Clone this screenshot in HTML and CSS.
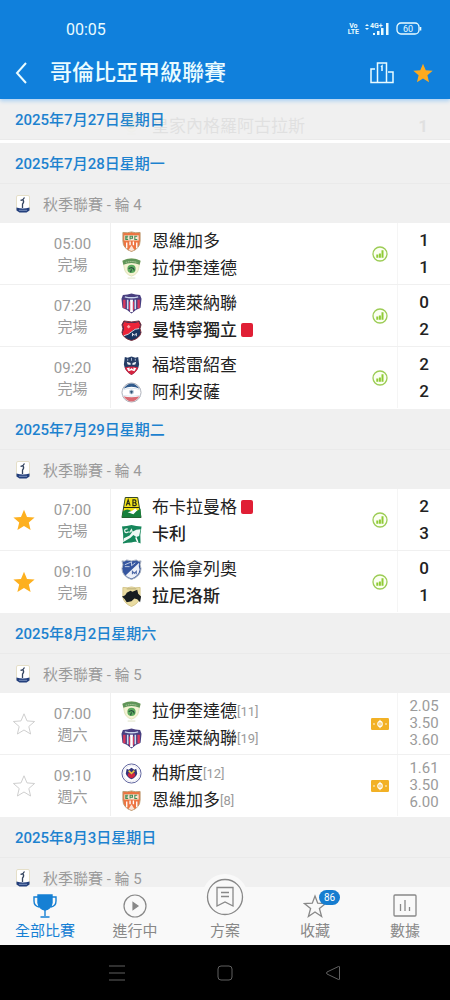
FILE: index.html
```html
<!DOCTYPE html>
<html lang="zh-Hant">
<head>
    <meta charset="UTF-8">
    <meta name="viewport" content="width=device-width, initial-scale=1">
    <title>哥倫比亞甲級聯賽</title>
    <link rel="stylesheet" href="styles.css">
</head>
<body>
    <!-- Shared icons and club badges -->
    <svg class="sprite" aria-hidden="true">
        <symbol id="star" viewBox="0 0 24 24">
            <path d="M12 1.800l3 7.100 7.600.6-5.800 5 1.800 7.500-6.600-4-6.600 4 1.800-7.500-5.800-5 7.600-.6z"/>
        </symbol>
        <symbol id="stats" viewBox="0 0 16 16">
            <circle cx="8" cy="8" r="7" fill="#fbfff2" stroke="#9ccc55" stroke-width="1.300"/>
            <path d="M5.300 8.500v3.200M7.900 7.500v4.200M10.500 4.200v7.500" fill="none" stroke="#8fcb35" stroke-width="2"/>
        </symbol>
        <symbol id="ticket" viewBox="0 0 18 12">
            <rect width="18" height="12" rx="1.200" fill="#f2b125"/>
            <ellipse cx="9" cy="6" rx="2.200" ry="2.700" fill="none" stroke="#fff" stroke-width="1.200"/>
            <path d="M9 1.800v8.400" stroke="#fff" stroke-width="1"/>
            <circle cx="3" cy="6" r=".8" fill="#fff"/>
            <circle cx="15" cy="6" r=".8" fill="#fff"/>
        </symbol>
        <symbol id="league" viewBox="0 0 14 18">
            <rect x=".5" y=".5" width="13" height="15" rx="1.500" fill="#fff" stroke="#e5dfc8"/>
            <path d="M4.500 5q2 1 4-2.500M7 5q1.500 2-.5 4v4" fill="none" stroke="#35455f" stroke-width="1.300"/>
            <path d="M.5 12.500q6.500 2 13 0v3l-3 2h-7l-3-2z" fill="#233f7c"/>
            <path d="M3 15.300h8" stroke="#9fb2d8" stroke-width=".7"/>
        </symbol>
        <symbol id="envigado" viewBox="0 0 22 22">
            <path d="M2 1.500q4.500 1 9-.5 4.500 1.500 9 .5v9q0 8-9 11-9-3-9-11z" fill="#ee7440" stroke="#b99a70"/>
            <path d="M6 12v6M9.500 11v4M13 11v4M16.500 12v6" stroke="#fff" stroke-width="1.400"/>
            <path d="M8 20l3-5 3 5-3 1z" fill="#fbe3d5"/>
            <path d="M3.500 4.500h15V10h-15z" fill="#f7e5d2"/>
            <path d="M7.500 5.500H5V9h2.500M5 7.200h2M9.500 9V5.500H12V7.500H9.500M17 5.500h-2.500V9H17" fill="none" stroke="#3f8c55" stroke-width="1.100"/>
        </symbol>
        <symbol id="equidad" viewBox="0 0 22 22">
            <path d="M2 3q9-4.500 18 0l-1.500 8q-1 6-7.500 8-6.500-2-7.500-8z" fill="#f5f2d3" stroke="#d6dcae" stroke-width=".8"/>
            <path d="M1.500 3q9.500-5 19 0l-1 4.200q-8.500-4-17 0z" fill="#609559"/>
            <path d="M5 4.700q6-2 12 0" fill="none" stroke="#bdd6a9" stroke-width=".9" stroke-dasharray="1.500 .8"/>
            <circle cx="11" cy="11.500" r="4.300" fill="#5cab5e"/>
            <path d="M8 11l3-1 2 1 1 2M10 15l1-3" fill="none" stroke="#24483a" stroke-width="1.100"/>
            <path d="M7 21h8" stroke="#dce1c4" stroke-width="1"/>
        </symbol>
        <symbol id="union" viewBox="0 0 22 22">
            <path d="M2 2q5 0 9-1.500Q15 2 20 2l1.500 4-1 9.500q-5.500 2-9.500 6-4-4-9.500-6L.5 6z" fill="#493f80"/>
            <path d="M3.500 7v9M18.500 7v9" stroke="#d83a5d" stroke-width="2.500"/>
            <path d="M7 7v10M15 7v10" stroke="#cddcf0" stroke-width="1.600"/>
            <path d="M11 7v13" stroke="#fff" stroke-width="3"/>
            <path d="M9 9v9M13 9v9" stroke="#d6365b" stroke-width="1.200"/>
            <path d="M4 4q7 2 14 0" fill="none" stroke="#cad7ed" stroke-width="1.400"/>
        </symbol>
        <symbol id="medellin" viewBox="0 0 22 22">
            <path d="M3 1q8 2 16 0l2 4q-2 4 0 8-1 6-10 8.500Q2 19 1 13q2-4 0-8z" fill="#17345f" stroke="#7a2936"/>
            <path d="M3.500 2q7.500 2 15 0l1.500 3-1 4q-5 0-8 3-4 4-8.500 4.500-1-2-.5-4Q4 9 2 5z" fill="#ed2438"/>
            <path d="M3 16.500q5-1 8.500-4.500 3-3 7.500-3" fill="none" stroke="#fff" stroke-width=".8"/>
            <path d="M6 7l2-2 2 2-2 2z" fill="#f9a8ac"/>
            <path d="M12 17v-3l2 2 2-2v3" fill="none" stroke="#e9eff7" stroke-width="1"/>
        </symbol>
        <symbol id="fortaleza" viewBox="0 0 22 22">
            <path d="M4 2l3 1 4-1.500L15 3l3-1 1 8q-1 7-8 11-7-4-8-11z" fill="#253c65"/>
            <path d="M6 7l4 1.500v2l-3-.5zM12 8.500L16 7l-1 3-3 .5z" fill="#eef2f6"/>
            <path d="M7 4v2M11 3v3M15 4v2" stroke="#a8b5cc" stroke-width="1"/>
            <path d="M4 13q7-2 14 0-1 4-7 8-6-4-7-8z" fill="#d52440"/>
            <path d="M6 14l3-1v2.500l2-2 2 2V13l3 1-2 3-3-1-3 1z" fill="#fff"/>
        </symbol>
        <symbol id="alianza" viewBox="0 0 22 22">
            <circle cx="11" cy="11" r="10" fill="#fff" stroke="#aaacb6"/>
            <path d="M2.500 7Q11-4 19.500 7 11 3 2.500 7z" fill="#315b8d"/>
            <path d="M2.500 15q8.500 2 17 0Q11 26 2.500 15z" fill="#d96972"/>
            <path d="M1.500 8.500q9.500-4 19 0M1.500 14q9.500 2 19 0" fill="none" stroke="#dbe5ee"/>
            <circle cx="11" cy="10.500" r="2.600" fill="#b8cadb"/>
            <path d="M9.500 10l1.500-1 1.500 1-1 2h-1z" fill="#2e5274"/>
        </symbol>
        <symbol id="bucaramanga" viewBox="0 0 22 22">
            <path d="M4.500.5h13L21 21.500H1z" fill="#f3e219" stroke="#273c20"/>
            <path d="M2 15q5-4 9 0 5 1 9.500-3l.5 9.500H1z" fill="#17803c"/>
            <path d="M7 16q5-1 8-4l2 2-4 4z" fill="#fff"/>
            <path d="M5.500 9l2-6 2 6M6.300 7h2.500M12.500 3v6h2.500q2-1 0-3 1.500-2-.5-3zM12.500 6H15M3 11h16" fill="none" stroke="#252c18" stroke-width="1.200"/>
        </symbol>
        <symbol id="cali" viewBox="0 0 22 22">
            <path d="M.5 2.500L6 2l5-1 5 1 5.500.5q-2 9-1 18-4.500-3-9.500-1-4 0-9 1 1-10-1-18z" fill="#16865b"/>
            <path d="M7 5q-4 0-3 3 1 2 4 0M9 9l2-3 1 3" fill="none" stroke="#e4f1e9" stroke-width="1.300"/>
            <path d="M12 8l4-2 4.500-.5-1.500 7-3 1-3-2-3 3-8 4.500 1-4 6-3z" fill="#f1f8f4"/>
            <path d="M15.500 14l2 5" stroke="#fff" stroke-width="1.500"/>
        </symbol>
        <symbol id="millonarios" viewBox="0 0 22 22">
            <path d="M1 2q3 1 5-1 5 2 10 0 2 2 5 1-2 4 0 8 0 8-10 11.500Q1 18 1 10q2-4 0-8z" fill="#36569f" stroke="#a6aebd"/>
            <path d="M5 17L19 4q-1 3 .5 7-1 7-8.500 9.500-4-1-6-3.500z" fill="#eef1f8"/>
            <path d="M4 6l7-3v4l4-3M4 8h5" fill="none" stroke="#d5ddec" stroke-width=".9"/>
            <path d="M12 16v-3l2 2 2-2v3" fill="none" stroke="#526ca9" stroke-width="1.200"/>
        </symbol>
        <symbol id="aguilas" viewBox="0 0 22 22">
            <path d="M2 1.500q4.500 1 9-.5 4.500 1.500 9 .5V12q-1 6-9 9.500Q3 18 2 12z" fill="#eadca1" stroke="#d4c58d"/>
            <path d="M1 11q4-1 5-4l4-2 2 1 5-2 1 4 3 3-1 6-3-3-3-1-3 3-5 1-2-3z" fill="#171d20"/>
            <path d="M6 3h10" stroke="#b4a974" stroke-width="1"/>
        </symbol>
        <symbol id="pasto" viewBox="0 0 22 22">
            <circle cx="11" cy="11" r="10" fill="#fff" stroke="#5a609b"/>
            <circle cx="11" cy="11" r="8.300" fill="none" stroke="#d3d4e4" stroke-width="1" stroke-dasharray="1 .7"/>
            <path d="M6 6l2 1 3-2 3 2 2-1 1 5q-1 4-6 6-5-2-6-6z" fill="#34367b"/>
            <path d="M8 10q3 3 6 0l1 3q-1 2-4 3-3-1-4-3z" fill="#cf273f"/>
            <path d="M8 8l3 3 3-3" fill="none" stroke="#edc83b" stroke-width="1.600"/>
        </symbol>
    </svg>

    <div class="app">
        <header class="top">
            <div class="status">
                <span class="clock">00:05</span>
                <div class="signals">
                    <div class="volte"><span>Vo</span><span>LTE</span></div>
                    <svg width="25" height="14" viewBox="0 0 25 14" fill="currentColor">
                        <path d="M0 4l2-2 2 2zM0 6h4L2 8z"/>
                        <text x="5" y="6" class="net">4G+</text>
                        <path d="M8 11h2v2H8zM12 9h2.500v4H12zM16 6h2.500v7H16zM21 1h2.500v12H21z"/>
                    </svg>
                    <svg width="26" height="14" viewBox="0 0 26 14">
                        <rect x="1" y="1" width="22" height="11" rx="4" fill="none" stroke="currentColor" stroke-width="1.300"/>
                        <path d="M24.500 5v3.500" stroke="currentColor" stroke-width="1.600"/>
                        <text x="7" y="10" class="battery">60</text>
                    </svg>
                </div>
            </div>
            <div class="title-bar">
                <button class="icon-button" aria-label="返回">
                    <svg width="14" height="22" viewBox="0 0 14 22" fill="none" stroke="currentColor" stroke-width="2"><path d="M12 1L3 11l9 10"/></svg>
                </button>
                <h1>哥倫比亞甲級聯賽</h1>
                <button class="icon-button" aria-label="積分榜">
                    <svg width="24" height="22" viewBox="0 0 24 22" fill="none" stroke="currentColor" stroke-width="1.500"><path d="M5 7H1v13.500h22V10h-5M7.500 20V1h9v19M11 5l1-1v5"/></svg>
                </button>
                <button class="icon-button gold" aria-label="收藏聯賽">
                    <svg width="22" height="22"><use href="#star"/></svg>
                </button>
            </div>
        </header>

        <main class="matches">
            <div class="pinned">
                <div class="passing" aria-hidden="true"><svg class="badge"><use href="#equidad"/></svg><span>皇家內格羅阿古拉斯</span><b>1</b></div>
                <h2 class="date">2025年7月27日星期日</h2>
            </div>

            <section>
                <h2 class="date">2025年7月28日星期一</h2>
                <h3 class="round"><svg><use href="#league"/></svg>秋季聯賽 - 輪 4</h3>
                <article class="match">
                    <span></span>
                    <div class="time"><span>05:00</span><span>完場</span></div>
                    <div class="teams">
                        <div class="team"><svg class="badge"><use href="#envigado"/></svg>恩維加多</div>
                        <div class="team"><svg class="badge"><use href="#equidad"/></svg>拉伊奎達德</div>
                    </div>
                    <svg class="info"><use href="#stats"/></svg>
                    <div class="score"><span>1</span><span>1</span></div>
                </article>
                <article class="match">
                    <span></span>
                    <div class="time"><span>07:20</span><span>完場</span></div>
                    <div class="teams">
                        <div class="team"><svg class="badge"><use href="#union"/></svg>馬達萊納聯</div>
                        <div class="team winner"><svg class="badge"><use href="#medellin"/></svg>曼特寧獨立<i class="red-card"></i></div>
                    </div>
                    <svg class="info"><use href="#stats"/></svg>
                    <div class="score"><span>0</span><span>2</span></div>
                </article>
                <article class="match">
                    <span></span>
                    <div class="time"><span>09:20</span><span>完場</span></div>
                    <div class="teams">
                        <div class="team"><svg class="badge"><use href="#fortaleza"/></svg>福塔雷紹查</div>
                        <div class="team"><svg class="badge"><use href="#alianza"/></svg>阿利安薩</div>
                    </div>
                    <svg class="info"><use href="#stats"/></svg>
                    <div class="score"><span>2</span><span>2</span></div>
                </article>
            </section>

            <section>
                <h2 class="date">2025年7月29日星期二</h2>
                <h3 class="round"><svg><use href="#league"/></svg>秋季聯賽 - 輪 4</h3>
                <article class="match">
                    <button class="favourite on" aria-label="取消收藏"><svg><use href="#star"/></svg></button>
                    <div class="time"><span>07:00</span><span>完場</span></div>
                    <div class="teams">
                        <div class="team"><svg class="badge"><use href="#bucaramanga"/></svg>布卡拉曼格<i class="red-card"></i></div>
                        <div class="team winner"><svg class="badge"><use href="#cali"/></svg>卡利</div>
                    </div>
                    <svg class="info"><use href="#stats"/></svg>
                    <div class="score"><span>2</span><span>3</span></div>
                </article>
                <article class="match">
                    <button class="favourite on" aria-label="取消收藏"><svg><use href="#star"/></svg></button>
                    <div class="time"><span>09:10</span><span>完場</span></div>
                    <div class="teams">
                        <div class="team"><svg class="badge"><use href="#millonarios"/></svg>米倫拿列奧</div>
                        <div class="team winner"><svg class="badge"><use href="#aguilas"/></svg>拉尼洛斯</div>
                    </div>
                    <svg class="info"><use href="#stats"/></svg>
                    <div class="score"><span>0</span><span>1</span></div>
                </article>
            </section>

            <section>
                <h2 class="date">2025年8月2日星期六</h2>
                <h3 class="round"><svg><use href="#league"/></svg>秋季聯賽 - 輪 5</h3>
                <article class="match">
                    <button class="favourite" aria-label="收藏"><svg><use href="#star"/></svg></button>
                    <div class="time"><span>07:00</span><span>週六</span></div>
                    <div class="teams">
                        <div class="team"><svg class="badge"><use href="#equidad"/></svg>拉伊奎達德<small>[11]</small></div>
                        <div class="team"><svg class="badge"><use href="#union"/></svg>馬達萊納聯<small>[19]</small></div>
                    </div>
                    <svg class="info ticket"><use href="#ticket"/></svg>
                    <div class="odds"><span>2.05</span><span>3.50</span><span>3.60</span></div>
                </article>
                <article class="match">
                    <button class="favourite" aria-label="收藏"><svg><use href="#star"/></svg></button>
                    <div class="time"><span>09:10</span><span>週六</span></div>
                    <div class="teams">
                        <div class="team"><svg class="badge"><use href="#pasto"/></svg>柏斯度<small>[12]</small></div>
                        <div class="team"><svg class="badge"><use href="#envigado"/></svg>恩維加多<small>[8]</small></div>
                    </div>
                    <svg class="info ticket"><use href="#ticket"/></svg>
                    <div class="odds"><span>1.61</span><span>3.50</span><span>6.00</span></div>
                </article>
            </section>

            <section>
                <h2 class="date">2025年8月3日星期日</h2>
                <h3 class="round"><svg><use href="#league"/></svg>秋季聯賽 - 輪 5</h3>
            </section>
        </main>

        <nav class="tabs">
            <button class="tab active">
                <svg width="24" height="26" viewBox="0 0 24 26" fill="none" stroke="currentColor" stroke-width="1.400">
                    <path d="M5 2h14v8q-1 6-7 7-6-1-7-7z" fill="currentColor"/>
                    <path d="M5 4H1v4q0 5 5 6M19 4h4v4q0 5-5 6M12 17v6M7.500 24h9"/>
                </svg>
                全部比賽
            </button>
            <button class="tab">
                <svg width="24" height="26" viewBox="0 0 24 26" fill="none" stroke="currentColor" stroke-width="1.200"><circle cx="12" cy="13" r="11"/><path d="M10 9.500l5 3.500-5 3.500z" fill="currentColor"/></svg>
                進行中
            </button>
            <button class="tab">
                <span class="plan-icon"><svg width="38" height="38" viewBox="0 0 38 38" fill="none" stroke="currentColor" stroke-width="1.300"><circle cx="19" cy="19" r="17.500"/><path d="M11 9.500h16v18.500l-8-4-8 4zM15 14.500h8M15 18.500h8"/></svg></span>
                方案
            </button>
            <button class="tab">
                <svg width="24" height="26" viewBox="0 0 24 26" fill="none" stroke="currentColor" stroke-width="1.300"><path d="M12 3l2.700 7.200 8 .3-6.300 5 2.200 8L12 19l-6.600 4.500 2.200-8-6.300-5 8-.3z"/></svg>
                <span class="count">86</span>
                收藏
            </button>
            <button class="tab">
                <svg width="24" height="26" viewBox="0 0 24 26" fill="none" stroke="currentColor" stroke-width="1.300"><rect x="1" y="2" width="22" height="21" rx="1"/><path d="M7.500 11v7M12 7v11M16.500 14v4"/></svg>
                數據
            </button>
        </nav>

        <div class="system-nav">
            <button aria-label="選單"><svg width="16" height="16" viewBox="0 0 16 16"><path d="M0 1h16M0 8h16M0 15h16"/></svg></button>
            <button aria-label="主畫面"><svg width="16" height="16" viewBox="0 0 16 16"><rect x="1" y="1" width="14" height="14" rx="3"/></svg></button>
            <button aria-label="返回"><svg width="16" height="16" viewBox="0 0 16 16"><path d="M14.500 2v12q0 1-1 .5L2 9q-1-1 0-2l11.500-5.500q1-.5 1 .5z"/></svg></button>
        </div>
    </div>
</body>
</html>
```
FILE: styles.css
```css
* {
    box-sizing: border-box;
}

body {
    margin: 0;
    font-family: Roboto, "Noto Sans CJK TC", sans-serif;
    color: #222;
    background: #f0f0f0;
}

h1, h2, h3 {
    margin: 0;
}

button {
    padding: 0;
    border: none;
    background: none;
    color: inherit;
    font: inherit;
    cursor: pointer;
}

svg {
    display: block;
    flex-shrink: 0;
}

.sprite {
    position: absolute;
    width: 0;
    height: 0;
}

.app {
    display: flex;
    flex-direction: column;
    height: 100vh;
    overflow: hidden;
}

/* Header */
.top {
    flex-shrink: 0;
    background: #1080dc;
    color: #e9fbff;
    padding: 18px 16px 0 14px;
    position: relative;
    z-index: 1;
    box-shadow: 0 2px 4px #a9d0f3;
}

.status {
    display: flex;
    justify-content: space-between;
    align-items: center;
    height: 22px;
    padding: 0 12px 0 52px;
}

.clock {
    font-size: 16px;
}

.signals {
    display: flex;
    align-items: center;
    gap: 6px;
}

.volte {
    display: flex;
    flex-direction: column;
    align-items: center;
    font-size: 7px;
    font-weight: 700;
    line-height: 6px;
}

.net {
    font-size: 7px;
    font-weight: 700;
}

.battery {
    font-size: 9px;
    fill: currentColor;
}

.title-bar {
    display: flex;
    align-items: center;
    height: 52px;
    margin-top: 7px;
    gap: 18px;
}

h1 {
    flex: 1;
    padding-left: 4px;
    font-size: 22px;
    line-height: 30px;
    font-weight: 500;
}

.gold {
    color: #fdaa1d;
    fill: currentColor;
}

/* Match list */
.matches {
    flex: 1;
    min-height: 0;
    overflow: hidden;
}

.pinned {
    position: relative;
    border-bottom: 3px solid #fff;
}

/* Row scrolling away under the pinned date */
.passing {
    position: absolute;
    inset: 15px 0 auto 121px;
    display: flex;
    font-size: 17px;
    line-height: 24px;
    opacity: 0.07;
}

.passing b {
    margin-left: auto;
    padding-right: 22px;
}

.date {
    height: 41px;
    padding: 1px 0 0 15px;
    border-bottom: 1px solid #eaeaea;
    color: #1d82cf;
    font-size: 15px;
    font-weight: 500;
    line-height: 41px;
}

.round {
    display: flex;
    align-items: center;
    gap: 13px;
    height: 39px;
    padding-left: 16px;
    color: #9b9b9b;
    font-size: 15px;
    font-weight: 400;
}

.round svg {
    width: 14px;
    height: 18px;
}

.match {
    display: grid;
    grid-template-columns: 48px 62px 1fr 35px 53px;
    align-items: center;
    height: 62px;
    background: #fff;
    border-bottom: 1px solid #f0f0f0;
}

.match:last-child {
    border-bottom-color: #fff;
}

.favourite {
    justify-self: center;
    fill: #fff;
    stroke: #cfcfcf;
    stroke-width: 1;
}

.favourite svg {
    width: 24px;
    height: 24px;
}

.favourite.on {
    fill: #fdb01f;
    stroke: none;
}

.time {
    display: flex;
    flex-direction: column;
    align-items: center;
    padding: 2px 13px 0 0;
    color: #9b9b9b;
    font-size: 15px;
    line-height: 21px;
}

.time span {
    white-space: nowrap;
}

.teams {
    align-self: stretch;
    display: flex;
    flex-direction: column;
    justify-content: center;
    padding: 2px 0 0 10px;
    border-left: 1px solid #f0f0f0;
}

.team {
    display: flex;
    align-items: center;
    font-size: 17px;
    line-height: 27px;
}

.winner {
    font-weight: 500;
}

.badge {
    width: 21px;
    height: 21px;
    margin-right: 10px;
}

.team small {
    color: #9b9b9b;
    font-size: 13px;
}

.red-card {
    width: 12px;
    height: 14px;
    margin-left: 4px;
    border-radius: 2px;
    background: #e01f35;
}

.info {
    width: 16px;
    height: 16px;
    justify-self: center;
}

.ticket {
    width: 18px;
    height: 12px;
}

.score, .odds {
    align-self: stretch;
    display: flex;
    flex-direction: column;
    align-items: center;
    justify-content: center;
    border-left: 1px solid #f5f5f5;
    font-size: 17px;
    font-weight: 500;
    line-height: 27px;
}

.odds {
    color: #9b9b9b;
    font-size: 15px;
    font-weight: 400;
    line-height: 17px;
}

/* Bottom tabs */
.tabs {
    position: relative;
    z-index: 1;
    flex-shrink: 0;
    display: grid;
    grid-template-columns: repeat(5, 1fr);
    height: 58px;
    background: #f9f9f9;
}

.tab {
    position: relative;
    display: flex;
    flex-direction: column;
    align-items: center;
    justify-content: flex-end;
    gap: 1px;
    padding-bottom: 3px;
    color: #888;
    font-size: 15px;
    line-height: 22px;
}

.active {
    color: #1680d4;
}

/* The middle icon rises above the bar */
.plan-icon {
    margin: -14px 0 -1px;
    padding: 4px;
    border-radius: 50%;
    background: #f9f9f9;
}

.count {
    position: absolute;
    top: 3px;
    left: 50%;
    margin-left: 4px;
    width: 21px;
    border-radius: 8px;
    background: #167dd0;
    color: #fff;
    font-size: 10px;
    line-height: 15px;
}

.system-nav {
    flex-shrink: 0;
    display: flex;
    justify-content: center;
    align-items: center;
    gap: 92px;
    height: 55px;
    background: #000;
}

.system-nav svg {
    fill: none;
    stroke: #606060;
    stroke-width: 1;
}
```
